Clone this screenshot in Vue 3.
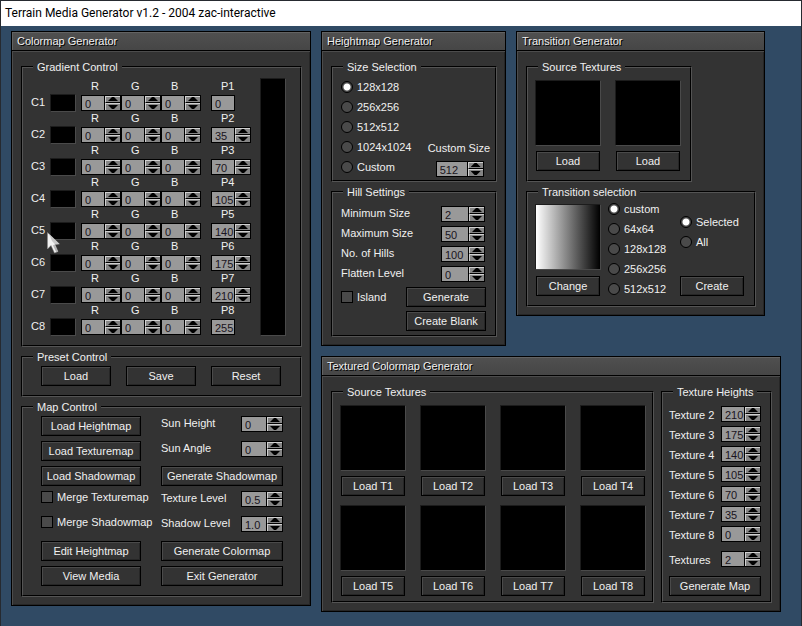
<script setup>
import { reactive, ref } from 'vue'

const stops = reactive([0, 35, 70, 105, 140, 175, 210, 255].map((p, i) => ({
  id: i + 1, R: 0, G: 0, B: 0, P: p, fixed: i === 0 || i === 7,
})))

const sun = reactive({ height: '0', angle: '0', texture: '0.5', shadow: '1.0' })
const sizes = ['128x128', '256x256', '512x512', '1024x1024', 'Custom']
const size = ref('128x128')
const customSize = ref(512)
const hills = reactive([
  { name: 'Minimum Size', value: 2 },
  { name: 'Maximum Size', value: 50 },
  { name: 'No. of Hills', value: 100 },
  { name: 'Flatten Level', value: 0 },
])
const transitions = ['custom', '64x64', '128x128', '256x256', '512x512']
const transition = ref('custom')
const scope = ref('Selected')
const heights = reactive([210, 175, 140, 105, 70, 35, 0].map((value, i) => ({
  name: `Texture ${i + 2}`, value,
})))
const textureCount = ref(2)

function step(obj, key, by) {
  obj[key] = Number(obj[key]) + by
}
function stepSun(key, by) {
  const decimal = key === 'texture' || key === 'shadow'
  sun[key] = decimal ? (Number(sun[key]) + by / 10).toFixed(1) : String(Number(sun[key]) + by)
}
</script>

<template>
  <div class="app">
    <header class="titlebar">Terrain Media Generator v1.2 - 2004 zac-interactive</header>
    <main class="desktop">
      <section class="window">
        <h2>Colormap Generator</h2>
        <div class="body">
          <fieldset>
            <legend>Gradient Control</legend>
            <div class="gradient">
              <div class="stops">
                <div v-for="s in stops" :key="s.id" class="stop">
                  <span class="stop-name">C{{ s.id }}</span>
                  <span class="well chip"></span>
                  <div class="channels">
                    <div v-for="c in ['R', 'G', 'B']" :key="c" class="channel">
                      <label :for="`c${s.id}${c}`">{{ c }}</label>
                      <div class="spin">
                        <input :id="`c${s.id}${c}`" v-model="s[c]" type="text">
                        <span class="arrows">
                          <button type="button" class="up" aria-label="Increase" @click="step(s, c, 1)"></button>
                          <button type="button" class="down" aria-label="Decrease" @click="step(s, c, -1)"></button>
                        </span>
                      </div>
                    </div>
                  </div>
                  <div class="channel">
                    <label :for="`p${s.id}`">P{{ s.id }}</label>
                    <div class="spin">
                      <input :id="`p${s.id}`" v-model="s.P" type="text" :readonly="s.fixed">
                      <span v-if="!s.fixed" class="arrows">
                        <button type="button" class="up" aria-label="Increase" @click="step(s, 'P', 1)"></button>
                        <button type="button" class="down" aria-label="Decrease" @click="step(s, 'P', -1)"></button>
                      </span>
                    </div>
                  </div>
                  <svg v-if="s.id === 5" class="pointer" width="14" height="22" viewBox="0 0 14 22" aria-hidden="true">
                    <path d="M0.5 0.5V17L4 13.5L7.5 21L11 19.5L8 12.5L12.5 12Z" fill="#f2f2f2" stroke="#8a8a8a" stroke-width="0.5" />
                    <path d="M2 2L12 12L8 12.3L5 9Z" fill="#c8c8c8" />
                    <path d="M7.5 12.5L11 19.5L9.3 20.2L6 13.5Z" fill="#b4b4b4" />
                  </svg>
                </div>
              </div>
              <div class="well ramp"></div>
            </div>
          </fieldset>

          <fieldset>
            <legend>Preset Control</legend>
            <div class="controls presets">
              <button v-for="b in ['Load', 'Save', 'Reset']" :key="b" type="button" class="btn">{{ b }}</button>
            </div>
          </fieldset>

          <fieldset>
            <legend>Map Control</legend>
            <div class="controls map">
              <button type="button" class="btn">Load Heightmap</button>
              <div class="pair">
                <label for="sun-height">Sun Height</label>
                <div class="spin w26">
                  <input id="sun-height" v-model="sun.height" type="text">
                  <span class="arrows">
                    <button type="button" class="up" aria-label="Increase" @click="stepSun('height', 1)"></button>
                    <button type="button" class="down" aria-label="Decrease" @click="stepSun('height', -1)"></button>
                  </span>
                </div>
              </div>
              <button type="button" class="btn">Load Texturemap</button>
              <div class="pair">
                <label for="sun-angle">Sun Angle</label>
                <div class="spin w26">
                  <input id="sun-angle" v-model="sun.angle" type="text">
                  <span class="arrows">
                    <button type="button" class="up" aria-label="Increase" @click="stepSun('angle', 1)"></button>
                    <button type="button" class="down" aria-label="Decrease" @click="stepSun('angle', -1)"></button>
                  </span>
                </div>
              </div>
              <button type="button" class="btn">Load Shadowmap</button>
              <button type="button" class="btn">Generate Shadowmap</button>
              <label class="check"><input type="checkbox">Merge Texturemap</label>
              <div class="pair">
                <label for="texture-level">Texture Level</label>
                <div class="spin w26">
                  <input id="texture-level" v-model="sun.texture" type="text">
                  <span class="arrows">
                    <button type="button" class="up" aria-label="Increase" @click="stepSun('texture', 1)"></button>
                    <button type="button" class="down" aria-label="Decrease" @click="stepSun('texture', -1)"></button>
                  </span>
                </div>
              </div>
              <label class="check"><input type="checkbox">Merge Shadowmap</label>
              <div class="pair">
                <label for="shadow-level">Shadow Level</label>
                <div class="spin w26">
                  <input id="shadow-level" v-model="sun.shadow" type="text">
                  <span class="arrows">
                    <button type="button" class="up" aria-label="Increase" @click="stepSun('shadow', 1)"></button>
                    <button type="button" class="down" aria-label="Decrease" @click="stepSun('shadow', -1)"></button>
                  </span>
                </div>
              </div>
              <button type="button" class="btn">Edit Heightmap</button>
              <button type="button" class="btn">Generate Colormap</button>
              <button type="button" class="btn">View Media</button>
              <button type="button" class="btn">Exit Generator</button>
            </div>
          </fieldset>
        </div>
      </section>

      <div class="right">
        <div class="upper">
          <section class="window">
            <h2>Heightmap Generator</h2>
            <div class="body">
              <fieldset>
                <legend>Size Selection</legend>
                <div class="sizes">
                  <div class="radios">
                    <label v-for="s in sizes" :key="s"><input v-model="size" type="radio" name="size" :value="s">{{ s }}</label>
                  </div>
                  <div class="custom">
                    <label for="custom-size">Custom Size</label>
                    <div class="spin w32">
                      <input id="custom-size" v-model="customSize" type="text">
                      <span class="arrows">
                        <button type="button" class="up" aria-label="Increase" @click="customSize++"></button>
                        <button type="button" class="down" aria-label="Decrease" @click="customSize--"></button>
                      </span>
                    </div>
                  </div>
                </div>
              </fieldset>
              <fieldset>
                <legend>Hill Settings</legend>
                <div class="hills">
                  <div v-for="(h, i) in hills" :key="h.name" class="pair">
                    <label :for="`hill${i}`">{{ h.name }}</label>
                    <div class="spin w28">
                      <input :id="`hill${i}`" v-model="h.value" type="text">
                      <span class="arrows">
                        <button type="button" class="up" aria-label="Increase" @click="step(h, 'value', 1)"></button>
                        <button type="button" class="down" aria-label="Decrease" @click="step(h, 'value', -1)"></button>
                      </span>
                    </div>
                  </div>
                </div>
                <div class="hill-actions">
                  <label class="check island"><input type="checkbox">Island</label>
                  <div class="hill-buttons">
                    <button type="button" class="btn">Generate</button>
                    <button type="button" class="btn">Create Blank</button>
                  </div>
                </div>
              </fieldset>
            </div>
          </section>

          <section class="window transition-window">
            <h2>Transition Generator</h2>
            <div class="body">
              <fieldset class="sources">
                <legend>Source Textures</legend>
                <div class="tiles pair-tiles">
                  <div v-for="n in 2" :key="n" class="tile">
                    <div class="well texture"></div>
                    <button type="button" class="btn">Load</button>
                  </div>
                </div>
              </fieldset>
              <fieldset>
                <legend>Transition selection</legend>
                <div class="transition">
                  <div class="tile">
                    <div class="well texture fade"></div>
                    <button type="button" class="btn">Change</button>
                  </div>
                  <div class="radios">
                    <label v-for="t in transitions" :key="t"><input v-model="transition" type="radio" name="transition" :value="t">{{ t }}</label>
                  </div>
                  <div class="scope">
                    <div class="radios">
                      <label v-for="t in ['Selected', 'All']" :key="t"><input v-model="scope" type="radio" name="scope" :value="t">{{ t }}</label>
                    </div>
                    <button type="button" class="btn">Create</button>
                  </div>
                </div>
              </fieldset>
            </div>
          </section>
        </div>

        <section class="window">
          <h2>Textured Colormap Generator</h2>
          <div class="body columns">
            <fieldset class="grow">
              <legend>Source Textures</legend>
              <div class="tiles">
                <div v-for="n in 8" :key="n" class="tile">
                  <div class="well texture"></div>
                  <button type="button" class="btn">Load T{{ n }}</button>
                </div>
              </div>
            </fieldset>
            <fieldset>
              <legend>Texture Heights</legend>
              <div class="heights">
                <div v-for="(h, i) in heights" :key="h.name" class="pair">
                  <label :for="`height${i}`">{{ h.name }}</label>
                  <div class="spin">
                    <input :id="`height${i}`" v-model="h.value" type="text">
                    <span class="arrows">
                      <button type="button" class="up" aria-label="Increase" @click="step(h, 'value', 1)"></button>
                      <button type="button" class="down" aria-label="Decrease" @click="step(h, 'value', -1)"></button>
                    </span>
                  </div>
                </div>
                <div class="pair count">
                  <label for="texture-count">Textures</label>
                  <div class="spin">
                    <input id="texture-count" v-model="textureCount" type="text">
                    <span class="arrows">
                      <button type="button" class="up" aria-label="Increase" @click="textureCount++"></button>
                      <button type="button" class="down" aria-label="Decrease" @click="textureCount--"></button>
                    </span>
                  </div>
                </div>
                <button type="button" class="btn">Generate Map</button>
              </div>
            </fieldset>
          </div>
        </section>
      </div>
    </main>
  </div>
</template>

<style>
body {
  margin: 0;
  background: #304a64;
}
</style>

<style scoped>
.app,
.app * {
  box-sizing: border-box;
}
.app {
  min-height: 100vh;
  border: solid #262a30;
  border-width: 1px 1px 0;
  background: #304a64;
  color: #f0f0f0;
  font: 11px/14px "Liberation Sans", Arial, sans-serif;
}
.titlebar {
  height: 25px;
  padding-left: 4px;
  background: #fff;
  color: #000;
  font: 12px/24px Roboto, "Noto Sans", sans-serif;
}
.desktop {
  display: grid;
  grid-template-columns: minmax(300px, 300fr) minmax(460px, 460fr);
  gap: 10px;
  align-items: start;
  padding: 5px 20px 10px 10px;
}
.right {
  display: grid;
  gap: 10px;
}
.upper {
  display: grid;
  grid-template-columns: minmax(185px, 185fr) minmax(249px, 249fr);
  gap: 10px;
  padding-right: 16px;
}
.transition-window {
  align-self: start;
}
.window {
  border: 1px solid #000;
  background: #333;
}
h2 {
  margin: 0;
  height: 19px;
  padding-left: 5px;
  border-bottom: 1px solid #000;
  background: linear-gradient(#505050, #464646);
  box-shadow: inset 1px 1px #636363;
  font-size: 11px;
  font-weight: 400;
  line-height: 18px;
  text-shadow: 1px 1px #000;
}
.body {
  display: grid;
  gap: 3px;
  padding: 9px 8px 8px 9px;
  box-shadow: inset 1px 1px #4c4c4c, inset -1px -1px #262626;
}
.columns {
  display: flex;
  gap: 7px;
}
.grow {
  flex: 1;
}
fieldset {
  min-width: 0;
  margin: 0;
  padding: 0;
  border: 2px groove #545454;
}
legend {
  margin-left: 10px;
  padding: 0 4px;
}
label {
  white-space: nowrap;
}
button,
input {
  margin: 0;
  font: inherit;
}

.btn {
  height: 20px;
  padding: 0;
  border: 1px solid #000;
  border-radius: 0;
  background: #333;
  box-shadow: inset 1px 1px #4a4a4a, inset -1px -1px #262626;
  color: #f0f0f0;
  text-align: center;
  white-space: nowrap;
}
.well {
  border: 1px solid;
  border-color: #1c1c1c #4a4a4a #4a4a4a #1c1c1c;
  background: #000;
}

.spin {
  display: flex;
  width: 40px;
  height: 16px;
}
.spin input {
  width: 24px;
  height: 16px;
  padding: 2px 0 0 3px;
  border: 1px solid #000;
  border-radius: 0;
  background: #999;
  color: #1a1420;
  line-height: 12px;
  outline: none;
}
.w26 { width: 42px; }
.w26 input { width: 26px; }
.w28 { width: 44px; }
.w28 input { width: 28px; }
.w32 { width: 48px; }
.w32 input { width: 32px; }
.arrows {
  display: grid;
  grid-template-rows: 7px 7px;
  flex: 1;
  border: solid #000;
  border-width: 1px 1px 1px 0;
}
.arrows button {
  display: grid;
  place-items: start center;
  padding: 0;
  border: solid;
  border-width: 1px 0 0 1px;
  border-color: #d0d0d0;
  border-radius: 0;
  background: #858585;
}
.arrows .up {
  border-bottom: 1px solid #000;
}
.arrows .down {
  padding-top: 1px;
}
.arrows button::before {
  content: "";
  width: 10px;
  height: 4px;
  background: #000;
  clip-path: polygon(40% 0, 60% 0, 100% 100%, 0 100%);
}
.arrows .down::before {
  clip-path: polygon(0 0, 100% 0, 60% 100%, 40% 100%);
}

.gradient {
  display: flex;
  justify-content: space-between;
  padding: 4px 14px 9px 8px;
}
.stops {
  padding-top: 2px;
}
.stop {
  position: relative;
  display: flex;
  align-items: end;
  height: 32px;
}
.stop-name {
  width: 19px;
  padding-bottom: 3px;
}
.chip {
  width: 26px;
  height: 18px;
}
.channels {
  display: flex;
  padding: 0 10px 0 5px;
}
.channel {
  display: grid;
  gap: 3px;
  padding-bottom: 1px;
}
.channel label {
  padding-left: 10px;
  line-height: 12px;
}
.ramp {
  width: 26px;
}
.pointer {
  position: absolute;
  left: 16px;
  top: 24px;
  z-index: 1;
}

.controls {
  display: grid;
  padding: 2px 17px 9px 18px;
}
.presets {
  grid-template-columns: repeat(3, 70px);
  justify-content: start;
  gap: 15px;
}
.map {
  grid-template-columns: 100px 122px;
  grid-auto-rows: 20px;
  gap: 5px 20px;
}
.pair {
  display: flex;
  justify-content: space-between;
  align-items: start;
}
.check {
  display: flex;
  gap: 4px;
  line-height: 12px;
}
input[type="checkbox"],
input[type="radio"] {
  appearance: none;
  flex: none;
  width: 12px;
  height: 12px;
  border: 1px solid #000;
  background: #4a4a4a;
}
input[type="checkbox"]:checked {
  background: #f0f0f0;
  box-shadow: inset 0 0 0 2px #4a4a4a;
}
input[type="radio"] {
  border-radius: 50%;
}
input[type="radio"]:checked {
  background: radial-gradient(circle, #fff 3px, #4a4a4a 4px);
}
.radios label {
  display: flex;
  align-items: center;
  gap: 4px;
  height: 20px;
}

.sizes {
  display: flex;
  justify-content: space-between;
  align-items: end;
  padding: 3px 5px 3px 8px;
}
.custom {
  display: grid;
  gap: 6px;
}
.custom .spin {
  margin-left: 8px;
}
.hills {
  display: grid;
  gap: 4px;
  padding: 7px 10px 5px 8px;
}
.hill-actions {
  display: flex;
  justify-content: space-between;
  padding: 0 9px 4px 8px;
}
.island {
  padding-top: 4px;
}
.hill-buttons {
  display: grid;
  grid-template-columns: 80px;
  gap: 4px;
}

.sources {
  width: 166px;
}
.tiles {
  display: grid;
  grid-template-columns: repeat(4, 66px);
  gap: 9px 14px;
  padding: 6px 0 5px 7px;
}
.pair-tiles {
  grid-template-columns: repeat(2, 66px);
  padding-bottom: 9px;
}
.tile {
  display: grid;
  gap: 5px;
  width: 66px;
}
.tile .btn {
  margin: 0 1px;
}
.texture {
  height: 66px;
}
.fade {
  background: linear-gradient(90deg, #fff, #000);
}
.transition {
  display: flex;
  align-items: start;
  gap: 7px;
  padding: 0 10px 6px 7px;
}
.transition .tile {
  gap: 6px;
  padding-top: 5px;
}
.scope {
  display: flex;
  flex-direction: column;
  align-self: stretch;
  justify-content: space-between;
  margin-left: auto;
  padding: 13px 0 3px;
}
.scope .btn {
  width: 64px;
}

.heights {
  display: grid;
  gap: 4px;
  padding: 7px 9px 5px 6px;
}
.heights .pair {
  gap: 6px;
}
.heights .pair label {
  width: 46px;
  padding-top: 2px;
}
.heights .count {
  margin: 5px 0;
}
</style>
